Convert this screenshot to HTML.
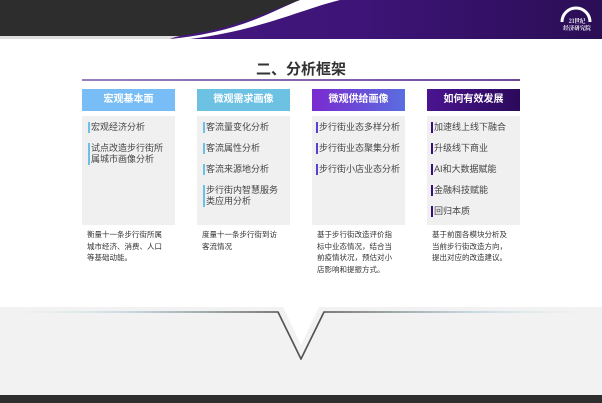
<!DOCTYPE html>
<html><head><meta charset="utf-8"><style>
*{margin:0;padding:0;box-sizing:border-box}
body{width:602px;height:403px;overflow:hidden;background:#fff;position:relative;font-family:"Liberation Sans","Noto Sans CJK SC",sans-serif}
.hdr{position:absolute;left:0;top:0;width:602px;height:39px}
.title{position:absolute;left:0;width:602px;top:58px;text-align:center;font-size:15px;font-weight:bold;color:#333}
.line{position:absolute;left:82px;top:79px;width:438px;height:2px;background:linear-gradient(90deg,#9a7fc0,#6a4a9a)}
.col{position:absolute;top:89px;width:93px}
.h{height:22px;color:#fff;font-size:10px;font-weight:bold;text-align:center;line-height:22px}
.box{margin-top:5px;height:109px;background:#f0f0f0;padding:6px 0 0 6px}
.it{font-size:9px;color:#444;line-height:11px;border-left:2px solid;padding-left:1px;margin-bottom:10px;white-space:nowrap}
.d{font-size:7.5px;color:#333;line-height:11.5px;padding:4px 0 0 5px;white-space:nowrap}
.band{position:absolute;left:0;top:307px;width:602px;height:89px;background:#f2f2f2}
.dark{position:absolute;left:0;top:395px;width:602px;height:8px;background:#2e2e2e}
</style></head><body>
<svg class="hdr" viewBox="0 0 602 39" preserveAspectRatio="none">
<defs><linearGradient id="p" x1="0" x2="1"><stop offset="0" stop-color="#4a1a85"/><stop offset="0.6" stop-color="#3e1478"/><stop offset="1" stop-color="#2a0e55"/></linearGradient></defs>
<rect width="602" height="39" fill="url(#p)"/>
<path d="M0 0 H300 C270 10 240 28 180 36 L0 36 Z" fill="#2d2d2d"/>
<path d="M300 0 H340 C300 10 260 30 190 39 L170 39 C240 32 270 12 300 0Z" fill="#fff"/>
<path d="M0 36 L180 36 C175 37 172 38 170 39 L0 39Z" fill="#ddd"/>
<path d="M562 22 A14 14 0 0 1 590 22" stroke="#fff" stroke-width="3" fill="none"/>
<text x="577" y="23" font-size="5.5" font-weight="bold" fill="#fff" text-anchor="middle" font-family="Noto Serif CJK SC,serif">21世纪</text>
<text x="577" y="30" font-size="5.5" font-weight="bold" fill="#fff" text-anchor="middle" font-family="Noto Serif CJK SC,serif">经济研究院</text>
</svg>
<div class="title">二、分析框架</div>
<div class="line"></div>
<div class="col" style="left:82px"><div class="h" style="background:#78bdf5">宏观基本面</div>
<div class="box"><div class="it" style="border-color:#6cc0e5">宏观经济分析</div><div class="it" style="border-color:#6cc0e5">试点改造步行街所<br>属城市画像分析</div></div>
<div class="d">衡量十一条步行街所属<br>城市经济、消费、人口<br>等基础动能。</div></div>
<div class="col" style="left:197px"><div class="h" style="background:#6dc2e3">微观需求画像</div>
<div class="box"><div class="it" style="border-color:#6cc0e5">客流量变化分析</div><div class="it" style="border-color:#6cc0e5">客流属性分析</div><div class="it" style="border-color:#6cc0e5">客流来源地分析</div><div class="it" style="border-color:#6cc0e5">步行街内智慧服务<br>类应用分析</div></div>
<div class="d">度量十一条步行街到访<br>客流情况</div></div>
<div class="col" style="left:312px"><div class="h" style="background:linear-gradient(90deg,#7a2ad0,#5a6ee0)">微观供给画像</div>
<div class="box" style="padding-left:4px"><div class="it" style="border-color:#5a3fd0">步行街业态多样分析</div><div class="it" style="border-color:#5a3fd0">步行街业态聚集分析</div><div class="it" style="border-color:#5a3fd0">步行街小店业态分析</div></div>
<div class="d">基于步行街改造评价指<br>标中业态情况，结合当<br>前疫情状况，预估对小<br>店影响和提振方式。</div></div>
<div class="col" style="left:427px"><div class="h" style="background:linear-gradient(90deg,#4a1490,#2a0a5a)">如何有效发展</div>
<div class="box" style="padding-left:4px"><div class="it" style="border-color:#3a0c80">加速线上线下融合</div><div class="it" style="border-color:#3a0c80">升级线下商业</div><div class="it" style="border-color:#3a0c80">AI和大数据赋能</div><div class="it" style="border-color:#3a0c80">金融科技赋能</div><div class="it" style="border-color:#3a0c80">回归本质</div></div>
<div class="d">基于前面各模块分析及<br>当前步行街改造方向，<br>提出对应的改造建议。</div></div>
<div class="band"></div>
<svg style="position:absolute;left:0;top:300px" width="602" height="60">
<defs><linearGradient id="l" x1="0" x2="1"><stop offset="0" stop-color="#d8e8ee" stop-opacity="0"/><stop offset="0.2" stop-color="#bcd4da"/><stop offset="0.46" stop-color="#555"/><stop offset="0.54" stop-color="#555"/><stop offset="0.8" stop-color="#bcd4da"/><stop offset="1" stop-color="#d8e8ee" stop-opacity="0"/></linearGradient></defs>
<path d="M283 7 L301 45 L319 7Z" fill="#fff"/>
<path d="M10 12 H278 L301 59 L324 12 H592" stroke="url(#l)" stroke-width="1.5" fill="none"/>
<path d="M278 12 L301 59 L324 12" stroke="#555" stroke-width="1.5" fill="none"/>
</svg>
<div class="dark"></div>
</body></html>
